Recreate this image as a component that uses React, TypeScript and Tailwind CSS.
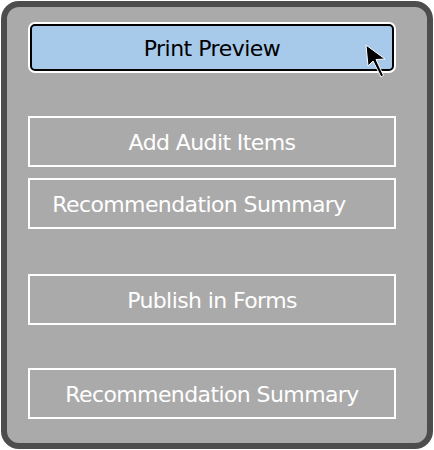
import React from "react";

const font = { fontFamily: '"DejaVu Sans", Verdana, sans-serif' };

const OutlineButton = ({ label, className = "" }: { label: string; className?: string }) => (
  <div
    className={`flex h-[51px] w-[368px] items-center justify-center border-2 border-white pt-[2px] text-[22px] tracking-[-0.6px] text-white ${className}`}
  >
    {label}
  </div>
);

export default function App() {
  return (
    <div className="h-[450px] w-[434px] bg-white pl-px pt-px" style={font}>
      <div className="relative flex h-[448px] w-[432px] flex-col rounded-[18px] border-[6px] border-[#4d4d4d] bg-[#aaaaaa] pl-[21px] pt-[15px]">
        {/* selected item */}
        <div className="h-[51px] w-[368px] rounded-[7px] bg-white p-[2px]">
          <div className="flex h-full w-full items-center justify-center rounded-[5px] border-2 border-black bg-[#a7c9ea] pt-[1px] text-[22px] tracking-[-0.5px] text-black">
            Print Preview
          </div>
        </div>

        <OutlineButton label="Add Audit Items" className="mt-[43px]" />
        <OutlineButton label="Recommendation Summary" className="mt-[11px] h-[50px] pr-[26px]" />
        <OutlineButton label="Publish in Forms" className="mt-[45px] h-[50px]" />
        <OutlineButton label="Recommendation Summary" className="mt-[43px]" />

        {/* mouse pointer */}
        <svg
          className="absolute left-[355px] top-[35px]"
          width="26"
          height="38"
          viewBox="0 0 26 38"
        >
          <path
            d="M4 3 L6 24 L11 19 L19 35 L21.5 33.5 L14 17.5 L23 17 Z"
            fill="black"
            stroke="white"
            strokeWidth="1"
            strokeLinejoin="round"
          />
        </svg>
      </div>
    </div>
  );
}
